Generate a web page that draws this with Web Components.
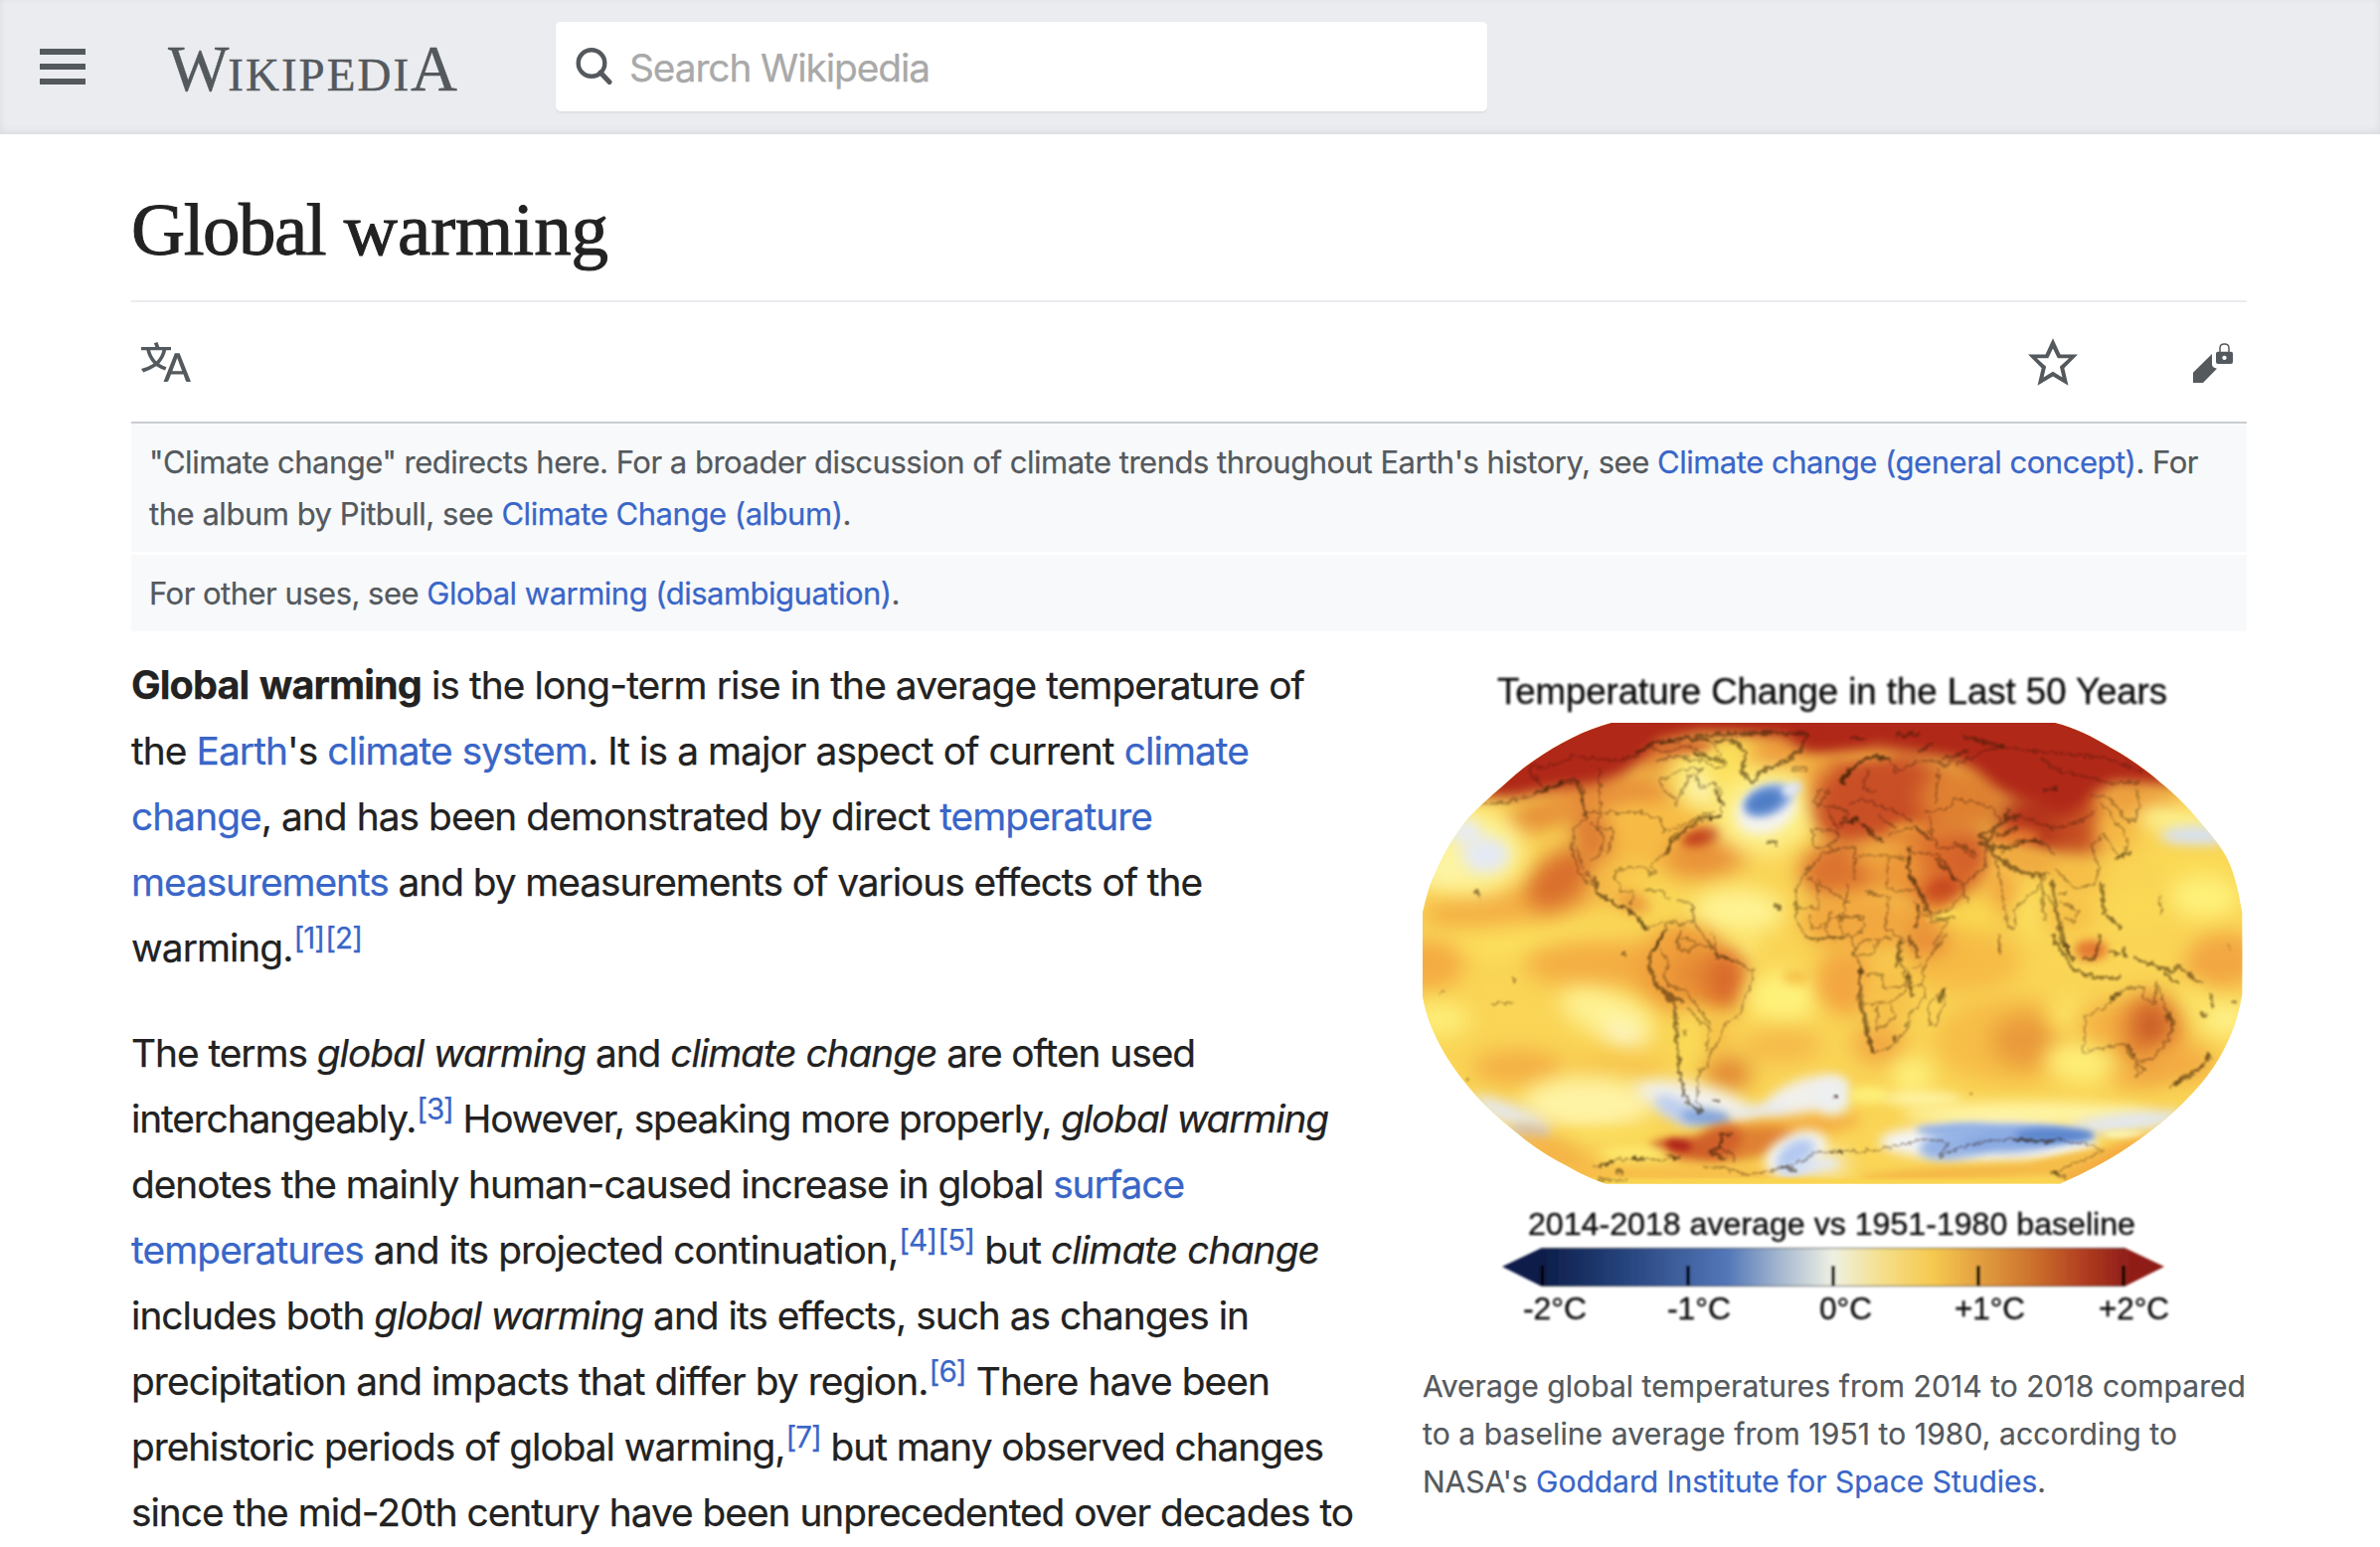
<!DOCTYPE html>
<html lang="en">
<head>
<meta charset="utf-8">
<title>Global warming</title>
<style>
html,body{margin:0;height:1556px;overflow:hidden;background:#fff}
body{font-family:Inter,"Liberation Sans",sans-serif;color:#222}
b{font-size:39.6px;word-spacing:2px}
</style>
</head>
<body>
<wiki-page>
  <wiki-header slot="header"></wiki-header>
  <wiki-title slot="main"><span style="letter-spacing:-1.5px">Global</span> warming</wiki-title>
  <page-actions slot="main"></page-actions>
  <hat-note slot="main">
    <text-line w="2061">"Climate change" redirects here. For a broader discussion of climate trends throughout Earth's history, see <wiki-link>Climate change (general concept)</wiki-link>. For</text-line>
    <text-line w="706">the album by Pitbull, see <wiki-link>Climate Change (album)</wiki-link>.</text-line>
  </hat-note>
  <hat-note slot="main">
    <text-line w="755">For other uses, see <wiki-link>Global warming (disambiguation)</wiki-link>.</text-line>
  </hat-note>
  <wiki-article slot="main">
    <wiki-par>
      <text-line w="1180"><b>Global warming</b> is the long-term rise in the average temperature of</text-line>
      <text-line w="1124">the <wiki-link>Earth</wiki-link>'s <wiki-link>climate system</wiki-link>. It is a major aspect of current <wiki-link>climate</wiki-link></text-line>
      <text-line w="1027"><wiki-link>change</wiki-link>, and has been demonstrated by direct <wiki-link>temperature</wiki-link></text-line>
      <text-line w="1077"><wiki-link>measurements</wiki-link> and by measurements of various effects of the</text-line>
      <text-line w="232">warming.<ref-mark>[1]</ref-mark><ref-mark>[2]</ref-mark></text-line>
    </wiki-par>
    <wiki-par>
      <text-line w="1070">The terms <i>global warming</i> and <i>climate change</i> are often used</text-line>
      <text-line w="1204">interchangeably.<ref-mark>[3]</ref-mark> However, speaking more properly, <i>global warming</i></text-line>
      <text-line w="1059">denotes the mainly human-caused increase in global <wiki-link>surface</wiki-link></text-line>
      <text-line w="1195"><wiki-link>temperatures</wiki-link> and its projected continuation,<ref-mark>[4]</ref-mark><ref-mark>[5]</ref-mark> but <i>climate change</i></text-line>
      <text-line w="1124">includes both <i>global warming</i> and its effects, such as changes in</text-line>
      <text-line w="1145">precipitation and impacts that differ by region.<ref-mark>[6]</ref-mark> There have been</text-line>
      <text-line w="1199">prehistoric periods of global warming,<ref-mark>[7]</ref-mark> but many observed changes</text-line>
      <text-line w="1229">since the mid-20th century have been unprecedented over decades to</text-line>
    </wiki-par>
    <wiki-figure slot="figure">
      <text-line w="828">Average global temperatures from 2014 to 2018 compared</text-line>
      <text-line w="759">to a baseline average from 1951 to 1980, according to</text-line>
      <text-line w="627">NASA's <wiki-link>Goddard Institute for Space Studies</wiki-link>.</text-line>
    </wiki-figure>
  </wiki-article>
</wiki-page>

<script>
function define(name, html, setup) {
  const t = document.createElement('template');
  t.innerHTML = html;
  customElements.define(name, class extends HTMLElement {
    constructor() {
      super();
      this.attachShadow({mode: 'open'}).append(t.content.cloneNode(true));
    }
    connectedCallback() { if (setup) setup(this); }
  });
}

define('wiki-link', `<style>:host{display:inline}a{color:#3966c8;text-decoration:none}</style><a><slot></slot></a>`);
define('ref-mark', `<style>:host{display:inline-block;line-height:1;font-size:29.6px;vertical-align:13.5px;padding-left:1px}a{color:#3966c8}</style><a><slot></slot></a>`);
define('wiki-par', `<style>:host{display:block;font-size:38.8px;line-height:66px;margin-bottom:40px;-webkit-text-stroke:.25px}</style><slot></slot>`);
define('hat-note', `<style>:host{display:block;background:#f8f9fb;color:#54595d;font-size:31px;line-height:52px;padding:13px 18px 12px;margin-bottom:3px;-webkit-text-stroke:.25px}</style><slot></slot>`);
define('wiki-page', `<style>:host{display:block;height:1556px;overflow:hidden}main{padding:0 134px 0 132px}</style><slot name="header"></slot><main><slot name="main"></slot></main>`);
define('wiki-article', `<style>:host{display:flex;padding-top:18px}.text{width:1299px;flex:none}</style><div class="text"><slot></slot></div><slot name="figure"></slot>`);
define('wiki-title', `<style>:host{display:block;padding:46px 0 21px;border-bottom:2px solid #eaecf0;font-family:"Liberation Serif",serif;font-size:75px;line-height:100px;height:100px}h1{all:unset;display:block;-webkit-text-stroke:1px #222}</style><h1><text-line w="480"><slot></slot></text-line></h1>`);

define('wiki-header', `<style>
:host{display:flex;align-items:center;height:135px;padding-bottom:1px;background:#eaecf0;box-shadow:inset 0 -2px 7px rgba(0,0,0,.08);box-sizing:border-box}
.menu{width:46px;height:36px;margin-left:40px;display:flex;flex-direction:column;justify-content:space-between}
.menu i{height:6px;background:#54595d}
.logo{margin-left:83px;width:390px;padding-top:9px;display:flex;align-items:baseline;color:#54595d;font-family:"Liberation Serif",serif;font-size:65px;line-height:86px;-webkit-text-stroke:.4px #54595d}
.logo small{font-size:47px;letter-spacing:2px;margin-left:-1px}
.search{display:flex;align-items:center;width:937px;height:90px;background:#fff;border-radius:5px;box-shadow:0 2px 2px rgba(0,0,0,.05)}
svg{margin-left:20px;width:37px;height:38px;flex:none}
.ph{margin-left:17px;font-size:38.8px;color:#a9a9a9;-webkit-text-stroke:.25px}
</style>
<div class="menu"><i></i><i></i><i></i></div>
<div class="logo">W<small>IKIPEDI</small>A</div>
<div class="search"><svg viewBox="0 0 37 38"><circle cx="16" cy="15.5" r="13.3" fill="none" stroke="#54595d" stroke-width="4.4"/><path d="M25 25 34 34.5" stroke="#54595d" stroke-width="5" stroke-linecap="round"/></svg>
<div class="ph"><text-line w="302">Search Wikipedia</text-line></div></div>`);

define('page-actions', `<style>
:host{display:flex;align-items:center;height:120px;border-bottom:2px solid #c8ccd1;padding:0 10px}
svg{width:50px;height:50px;fill:#54595d;display:block}.star{margin-left:auto;margin-right:110px}
</style>
<svg viewBox="0 0 20 20"><path d="M20 18h-1.44a.61.61 0 0 1-.4-.12.81.81 0 0 1-.23-.31L17 15h-5l-1 2.54a.77.77 0 0 1-.22.3.59.59 0 0 1-.4.14H9l4.55-11.47h1.89zm-3.53-4.31L14.89 9.5a11.62 11.62 0 0 1-.39-1.24q-.09.37-.19.69l-.19.56-1.58 4.19zm-6.3-1.58a13.43 13.43 0 0 1-2.91-1.41 11.46 11.46 0 0 0 2.81-5.37H12V4H7.31a4 4 0 0 0-.2-.56C6.87 2.79 6.6 2 6.6 2l-1.47.5s.4.89.6 1.5H0v1.33h2.15A11.23 11.23 0 0 0 5 10.7a17.19 17.19 0 0 1-5 2.1q.56.82.87 1.38a23.28 23.28 0 0 0 5.22-2.51 15.64 15.64 0 0 0 3.56 1.77zM3.63 5.33h4.91a8.11 8.11 0 0 1-2.45 4.45 9.11 9.11 0 0 1-2.46-4.45z"/></svg>
<svg class="star" viewBox="0 0 20 20"><path fill-rule="evenodd" d="M20 7h-7L10 .5 7 7H0l5.46 5.47-1.64 7 6.18-3.7 6.18 3.73-1.63-7zm-10 6.9-3.76 2.27 1-4.28L3.5 8.5h4.61L10 4.6l1.9 3.9h4.6l-3.73 3.4 1 4.28z"/></svg>
<svg viewBox="750 147 150 150"><path d="M768 254 825 198V229Q825 240 840 242L798 285H768z"/><path fill-rule="evenodd" d="M843 191H882Q888 191 888 197V222Q888 228 882 228H843Q837 228 837 222V197Q837 191 843 191zM862.500 203a6.500 6.500 0 1 0 .01 0z"/><path d="M849 192V180Q849 168 862.500 168 876 168 876 180V192" fill="none" stroke="#54595d" stroke-width="4.500"/></svg>`);

/* Anomaly field: each quadrant lists [cx, cy, rx, ry, colour, rotation, blur] in thirds of a pixel from its origin. */
const FIELD = {
 A: [1410, 660, [
  [300,850,400,60,'#fbdf5c'],[330,750,280,60,'#f4b044',-8],[480,670,120,75,'#d96f2c',-40],[420,480,120,45,'#e58b35',-15],
  [640,420,200,70,'#e8903a'],[850,290,170,65,'#de7a30'],[750,540,200,100,'#f7bb45'],[570,540,55,100,'#dd7a32',-15],[640,680,60,60,'#f3aa41'],
  [900,345,105,95,'#fbe468'],[910,395,55,50,'#fdf7bb'],[1000,330,75,100,'#fbe05c'],[1140,290,90,50,'#ec963a'],[1260,340,80,50,'#f2ac42'],
  [920,600,130,70,'#e99238',-10],[905,545,62,26,'#c2431d',-15,14],
  [1100,470,160,125,'#fdf08a',-15],[1100,462,95,70,'#f4f3f0',-25,16],[1105,435,78,44,'#8eace0',-22,12],[1095,438,56,32,'#4f7ec6',-20,12],
  [1180,400,32,20,'#dfe7f6',-20,10],[210,590,160,130,'#fdf295'],[250,600,75,55,'#e4e9f5',0,20],[190,530,60,40,'#e8ebf2',25,20],[120,650,80,30,'#fdf5b0',-15],
  [1010,770,140,70,'#fef393'],[1000,890,70,60,'#fdee7a'],[680,680,60,40,'#f9cf4e'],[800,770,70,30,'#fadb58'],[700,745,50,25,'#e99238',20,20],
  [850,865,90,45,'#ec9238'],[1320,650,120,80,'#dc7430'],[1340,460,80,90,'#c84f26'],[1290,800,80,50,'#f1a63f']],
  'M100 100H1420V265L1290 288 1220 290 1150 245 1000 235 900 230 780 255 730 305 670 355 580 388 480 398 340 425 230 425 100 420z'],
 B: [1840, 660, [
  [0,360,60,90,'#f3ae42'],[170,420,210,140,'#c94f26'],[400,430,130,100,'#df8131'],[70,490,90,60,'#c94f26'],[240,525,60,22,'#f0a63d',0,16],
  [330,640,130,130,'#db6c2c'],[340,715,60,44,'#c7441f',-20,18],[420,600,65,80,'#d3602a'],[650,500,150,100,'#b5361c'],[760,500,80,110,'#c54c22'],
  [560,545,75,25,'#e5782e',0,16],[600,615,110,40,'#f0ab41',15,18],[740,665,90,55,'#f6bc45'],[190,640,100,80,'#ec9639'],[40,650,80,80,'#dc7430'],
  [130,600,60,25,'#f4b344'],[100,800,160,95,'#f2a840'],[290,800,60,60,'#ee9a3a'],[520,720,55,90,'#f2a840'],[430,800,90,70,'#fad851'],[620,780,60,70,'#fbe060'],
  [340,785,50,8,'#fce35a',-15,6],[720,780,80,60,'#f6bf47'],[870,520,70,70,'#f5b744'],[930,435,140,45,'#eb983a',8],[1050,500,120,45,'#fdf08a',10,26],
  [1115,542,115,30,'#d6e0f5',0,18],[1100,630,150,30,'#fbdc54'],[1130,725,110,65,'#fef17a'],[930,760,90,60,'#fad955'],[1200,890,90,45,'#f4aa42'],[790,890,45,22,'#ee8735',0,18],[120,288,100,20,'#eb9f3c',-4,16]],
  'M-60 100H1000L1150 400 950 385 860 382 800 415 750 460 700 480 620 450 560 430 510 405 440 345 380 315 300 300 200 283 100 268-60 272z'],
 C: [1410, 940, [
  [70,90,120,80,'#f4ac42'],[600,90,230,75,'#f4ae43'],[860,120,160,120,'#f0a03b'],[920,120,110,70,'#e58a35'],[975,140,55,85,'#d8692b'],
  [110,255,100,50,'#fdee78'],[620,240,150,65,'#fef295',20],[670,305,65,34,'#fdf6cc',30],[350,400,140,55,'#f4b045'],[650,400,150,45,'#f7c54c'],
  [1150,190,110,80,'#fef17a'],[1330,120,65,95,'#f5b645'],[1190,128,40,22,'#f7c34b',0,14],[1150,335,120,50,'#f5b94a'],[935,300,60,60,'#f7bf49'],[870,320,40,100,'#fadc58'],[985,420,72,54,'#e28a35'],
  [560,510,200,80,'#fef3a6'],[330,545,130,32,'#e6eaf3',22,20],[390,595,60,20,'#c3d4f5',8,12],[880,500,180,50,'#f2f2ef',12,22],[830,530,75,32,'#bccef2',30,18],[920,552,78,26,'#84a6df',6,14],
  [1220,490,130,55,'#f1f0ec',-18,18],[1080,535,90,22,'#e8ebf2',-8,16],[1150,590,240,36,'#f4ae43',-8,20],[1000,635,190,50,'#df8132',-8,18],[860,640,110,25,'#cc5527',5,14],[835,636,40,16,'#b0241a',8,10],[960,625,70,45,'#d0602a',-20,16],
  [620,600,180,16,'#fbdc58',0,14],[460,660,150,45,'#f4b045',25],[700,660,100,20,'#fdea70',0,16],[750,722,450,24,'#f7bc48',0,16],
  [1190,660,100,60,'#f4f4f0',-25,16],[1190,668,65,42,'#b3c8f1',-35,14],[1230,700,90,20,'#d3dff6',-8,12],[700,746,800,10,'#fad450',0,5]]],
 D: [1840, 940, [
  [60,150,90,90,'#f3a541'],[400,80,180,95,'#f6bb45'],[180,180,80,100,'#f7c14a'],[540,320,220,130,'#f6bd47'],[590,320,100,80,'#ea9a3b'],[760,380,110,65,'#fdee78'],[720,240,60,60,'#fbe162'],
  [290,20,70,40,'#e58334'],[790,45,45,25,'#e27a32',0,14],[1180,90,110,70,'#f2a642'],[1190,255,80,50,'#fef28a'],[1090,220,60,60,'#fbe468'],[860,270,110,70,'#f5b244'],[970,300,105,125,'#ea9238'],[970,275,52,72,'#c95c28'],
  [1060,390,110,55,'#f3ab43'],[930,430,80,30,'#f2a642'],[150,330,80,60,'#f2a843'],[250,430,60,60,'#fdf07d'],[10,490,55,55,'#edeff0',0,18],[120,485,60,25,'#fdf07a',0,14],[280,495,120,20,'#fef5a8',0,16],
  [600,540,380,35,'#fef5a5',0,20],[900,565,180,28,'#e2e8f5',-6,18],[480,625,330,58,'#f3f5f9',0,18],[530,598,270,26,'#92b0e5',2,11],[390,630,120,46,'#96b3e6',-10,14],[560,620,160,36,'#8aaae2',-4,12],[680,606,120,22,'#5c86cd',0,11],
  [890,603,60,12,'#fdf3b0',0,8],[850,680,170,38,'#f4ab42',-22,14],[450,716,360,20,'#f5b645',-3,12],[720,680,120,16,'#f6bc47',-12,9],[0,690,60,30,'#f5f3ea'],[200,746,800,9,'#fad450',0,5]]]
};
const COAST = {
 A: {thin: 'M245 448 340 437 400 418 450 395 490 378 530 375 548 395 545 440 560 485 M400 325 420 340 470 325 520 300 580 310 640 315 720 300 M395 330 385 350 430 400 M430 400 540 375M598 340V470 M560 472H720L780 490 790 530 860 505 900 480 940 470 920 490 970 490 960 440 965 400 940 380 900 400 885 360 910 340 850 340 780 375 790 410 820 425 825 455 850 400 870 360 880 350 M690 300 760 265 860 250 940 260 980 330 940 340 880 290 M560 485 520 520 512 580 530 640 560 690 M525 570 545 640 M560 650 590 720 660 755 700 780 740 825 790 800 M600 470 590 520 640 520 620 600 M570 500 610 540 600 600 570 620 M650 680 640 650 690 635 740 635 750 660 765 655 755 625 800 590 810 550 850 525 890 510 M650 680 660 710 700 710 690 750 M730 705 780 710 810 735 M830 735 880 750 880 800 M770 870 800 800 850 810 880 800 920 860 950 890 M840 830 830 860 860 850 890 870 M1175 345 1220 350 1220 335 1180 340 M1240 520 1300 525 1320 540 1290 575 1240 575z M1320 580 1270 600 1220 650 1190 700 1190 790 1220 850 1300 855 1350 845 M1225 665 1255 690V760H1190 M1255 680 1350 745 M1230 780 1240 820 1280 810 1300 770M1280 800 1285 850M1320 780 1330 850 M1270 400 1240 440 1260 450 1290 400 M1275 450 1310 510 1350 500 M740 275 800 290 870 270 920 300 M770 315 830 300 900 320 950 300 M800 250 840 265', thick: 'M530 375 545 440 555 485 M580 660 590 715 640 745 700 775 740 825 M890 240 990 235 1110 230 1220 235 1210 280 1150 320 1080 350 1058 382 1025 345 1040 290 1000 255 940 255 M1165 305 1190 285M760 890 800 820 M810 550 805 595 M700 295 750 265 860 245 930 255 M880 290 970 320 M1350 350 1325 385 M815 560 900 490 970 485 M220 705 240 725 M400 415 490 378 M945 400 970 450M1100 560 1135 565M1125 745 1140 765'},
 B: {thin: 'M40 390 35 370 90 320 140 300 180 310 200 350 240 330 300 310 350 330 380 310 M120 340 100 400 140 410 M60 450 100 430 150 450 200 470 250 500 M50 500 90 490 140 560 160 550 M180 540 250 515 300 540 M240 570 240 650 300 780 310 800 380 785 M240 590 330 600 390 680 410 700 370 760 320 780 M290 470 360 460 380 430 430 440 490 460 520 500 M300 520 330 580 400 570 450 600 M300 480 310 530M330 340 320 440 M380 330 480 280 530 275 650 290 720 295 850 310 940 350 M490 570 520 690 540 820 560 820 560 760 630 700 660 650 M520 590 570 555 640 560 680 600 M550 480 600 490 680 520 750 500 800 470 M680 640 740 700 800 690 815 640 790 570 830 540 870 600 M790 420 850 430 890 490 920 500 940 440 920 400 M820 440 880 520 900 550 890 600 860 610 M640 700 680 760 700 850 730 900 M700 740 750 770 740 800 710 790 M690 720 720 710 M0 580 70 575 80 600 160 600 230 610 M75 580 80 680 M175 610V705H260M60 690 40 780 100 790 110 820 60 850 M100 710 180 730 170 820 230 860 M0 790 100 790M260 740 280 780 360 800 310 880 M70 900 100 860 190 850 M400 700 420 750M640 660 650 800M515 840V900M0 450 60 470 20 540 M150 480 200 520 M380 560 440 610M400 690 470 640 470 580 M1000 720V780M640 310 700 350 760 360 850 385 940 380', thick: 'M40 390 45 360 90 320 140 303 180 312 M450 540 480 530 530 500 540 460 M450 560 490 590 540 630 610 660 655 655 M455 535 490 590 M490 570 550 580 590 555 640 560 M50 500 90 490 M100 510 160 560 M260 520 310 560 M240 580 240 650 310 780 M320 610 380 670 M670 680 690 780 720 900 M820 680 830 780 M840 780 880 820 M870 610 910 590 M60 245 110 250M205 238 275 235 M270 290 310 265M400 240 530 275 M340 310 420 285 M270 750 260 820 M470 570 520 500 580 480 M510 540 570 520 M645 405 690 400 M460 545 500 600 560 645 620 660'},
 C: {thin: 'M940 0 955 70 1000 75 1060 110 1055 150 1030 200 1025 245 980 265 960 320 930 360 920 400 895 410 890 500 910 530 M840 0 830 40 860 50 900 30 940 40 M780 50 810 90 790 120 800 150 850 170 880 200 930 270 925 320 920 350 M860 220 900 260 940 290 M850 290 855 310 M580 700 650 680 700 675 780 680 840 670 M590 740 680 740 M910 700 980 705 1040 725 1140 705 1200 690 1250 655 1350 655 M970 600 960 640 1010 670 1000 690 M1220 0 1250 15 1340 5M130 170 115 176 M330 130 345 145 M270 205 340 210', thick: 'M790 0 755 50 745 95 780 170 820 205 830 300 840 440 860 500 890 530 915 532 M750 100 770 160 830 200 M840 440 850 490 M790 165 850 205 M935 500 955 503 M1300 492 1315 490M995 598 965 605 960 640 930 655 980 680M1140 700 1190 710M590 700 640 685M690 670 730 680M800 660 840 680M645 715 670 718 M940 55 1000 80M665 60 675 63M195 433 201 438'},
 D: {thin: 'M350 0 300 70 280 120 290 190 250 230 230 290 180 345 130 355 120 290 100 210 95 100 75 50 70 0 M0 10 60 0M100 210 190 205 230 170 240 100 M110 120 160 120 170 170 M145 215V290L200 250 185 215M160 160 250 155 290 155M75 60H130L150 20M250 100 280 90M210 60 230 130 M300 270 305 200 350 165 350 200 320 275z M770 250 830 220 870 180 910 160 950 160 945 190 980 210 990 140 1010 210 1040 270 1020 320 980 370 940 385 910 370 890 330 830 340 765 355 770 290z M925 385 950 400 930 430z M1030 460 1080 420 1130 400 1140 360 1160 380 M0 655H120L200 640 290 615 360 630 330 670 400 640 500 620 560 620 700 620 790 635 830 655 740 690 680 720 720 740 M1200 30 1210 50M510 0 514 60', thick: 'M95 100 90 200 130 350 M215 20 205 100 M240 0 270 70M240 120 250 190 M670 0 700 50 740 110 800 128 880 130 M700 20 740 80 M820 0 800 70 760 80 M840 50 880 60 M890 40 890 70 M920 70 1000 100 1040 110 1060 90M1010 110 1050 150 M1060 100 1120 145 M1150 180 1158 220M1120 235 1140 245 M1220 210 1230 205 M850 195 875 180 M900 330 920 370M1035 455 1130 400M1140 355 1142 380M330 200 350 165M425 481H431 M15 492H25M190 320 200 305M555 618 680 625M670 722 700 718M1020 240 1038 290'}
};
const blob = ([x, y, rx, ry, c, r = 0, b = 32]) =>
  `<ellipse cx="${x}" cy="${y}" rx="${rx}" ry="${ry}" fill="${c}" transform="rotate(${r} ${x} ${y})" style="filter:blur(${b}px)"/>`;
const quad = (k, body) => `<g transform="translate(${FIELD[k][0]} ${FIELD[k][1]}) scale(.33333)">${body}</g>`;
const keys = ['A', 'B', 'C', 'D'];
const field = keys.map(k => quad(k, FIELD[k][2].map(blob).join(''))).join('')
  + ['A', 'B'].map(k => quad(k, `<path d="${FIELD[k][3]}" fill="#b02818" style="filter:blur(19px)"/>`)).join('')
  + quad('A', blob([850,275,90,18,'#d0602a',-5,14]));
const coast = keys.map(k => quad(k, `<path d="${COAST[k].thin}" stroke-width="4.500" opacity=".42"/><path d="${COAST[k].thick}" stroke-width="9" opacity=".5"/>`)).join('');
const label = (x, y, w, s, t) => `<text x="${x}" y="${y}" textLength="${w}" lengthAdjust="spacingAndGlyphs" font-size="${s}">${t}</text>`;

define('wiki-figure', `<style>
:host{display:block;width:829px;flex:none;font-size:30px;line-height:48px;color:#54595d;margin-top:-1px;-webkit-text-stroke:.25px}
svg{display:block;width:829px;height:715px}
text{font-family:"Liberation Sans",Arial,sans-serif;fill:#111;stroke:#111;stroke-width:.4px}
</style>
<svg viewBox="1431 655 829 715">
<defs>
<clipPath id="globe"><path d="M1621 727H2067C2087 732 2105 741 2123 752 2141 762 2157 773 2173 787 2188 799 2201 812 2213 827 2224 840 2233 850 2240 863 2249 882 2252 900 2255.300 918V1000C2252 1020 2246 1040 2233 1063 2224 1078 2214 1091 2202 1103 2187 1119 2170 1133 2152 1146 2127 1164 2099 1179 2072 1190.500H1615C1600 1185 1589 1180 1577 1173 1563 1166 1548 1157 1535 1147 1514 1130 1493 1113 1477 1093 1462 1075 1451 1058 1443 1040 1437 1027 1433 1014 1430.500 1000V920C1434 905 1437 892 1443 880 1452 859 1463 840 1477 823 1487 812 1498 802 1510 792 1521 782 1531 773 1543 765 1566 749 1594 734 1621 727z"/></clipPath>
<filter id="rough" x="0" y="0" width="100%" height="100%"><feTurbulence type="fractalNoise" baseFrequency=".16" numOctaves="2" seed="4"/><feDisplacementMap in="SourceGraphic" scale="8" xChannelSelector="R" yChannelSelector="G"/><feGaussianBlur stdDeviation=".8"/></filter>
<filter id="soft" x="-5%" y="-10%" width="110%" height="120%"><feGaussianBlur stdDeviation=".9"/></filter>
<linearGradient id="scale"><stop offset="0" stop-color="#0c1d49"/><stop offset=".06" stop-color="#0c1d49"/><stop offset=".18" stop-color="#25427b"/><stop offset=".34" stop-color="#5377b8"/><stop offset=".42" stop-color="#a5b8d0"/><stop offset=".5" stop-color="#eff0e3"/><stop offset=".57" stop-color="#f4e08e"/><stop offset=".65" stop-color="#f6c950"/><stop offset=".72" stop-color="#e3a040"/><stop offset=".8" stop-color="#cd722d"/><stop offset=".88" stop-color="#b03c20"/><stop offset=".94" stop-color="#92201a"/><stop offset="1" stop-color="#8c1b16"/></linearGradient>
</defs>
<g clip-path="url(#globe)"><path fill="#fad556" d="M1420 700h850v520h-850z"/>${field}<g fill="none" stroke="#2c1804" stroke-linejoin="round" filter="url(#rough)"><path d="M1420 700h850v520h-850z" stroke="none"/>${coast}</g></g>
<g filter="url(#soft)">
${label(1506,708,674,37,'Temperature Change in the Last 50 Years')}
${label(1537,1242,611,31,'2014-2018 average vs 1951-1980 baseline')}
<path d="M1511 1274 1550 1255.500H2138L2177 1274 2138 1293.500H1550z" fill="url(#scale)"/><path d="M1550 1255.500H2138M1550 1293.500H2138" stroke="#333" stroke-opacity=".5" stroke-width="1.500"/>
<path d="M1551.500 1273V1293M1698 1273V1293M1844 1273V1293M1990 1273V1293M2136 1273V1293" stroke="#000" stroke-width="3.500"/>
${label(1532,1326.5,64,32,'-2°C')}${label(1677,1326.5,64,32,'-1°C')}${label(1830,1326.5,53,32,'0°C')}${label(1966,1326.5,71,32,'+1°C')}${label(2111,1326.5,71,32,'+2°C')}
</g></svg>
<slot></slot>`);

/* A single line of copy, tracked so that it sets to the measure given in w. */
define('text-line', `<style>:host{display:block;white-space:nowrap}span{display:inline-block}</style><span><slot></slot></span>`, el => {
  const span = el.shadowRoot.querySelector('span');
  const slot = el.querySelector('slot');
  const text = slot ? el.getRootNode().host.textContent : el.textContent;
  const n = text.trim().replace(/\s+/g, ' ').length;
  let d = 0;
  for (let i = 0; i < 4; i++) {
    d += (el.getAttribute('w') - span.getBoundingClientRect().width) / n;
    span.style.letterSpacing = d + 'px';
  }
});
</script>
</body>
</html>
